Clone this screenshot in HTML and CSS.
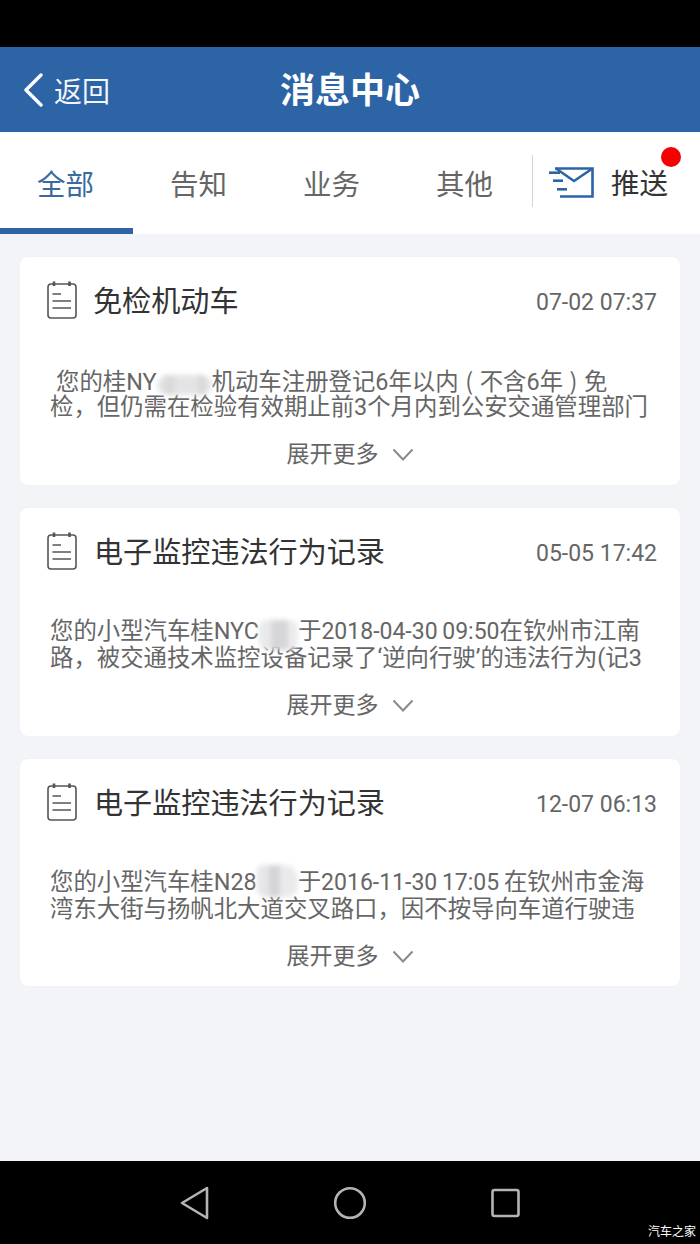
FILE: index.html
```html
<!DOCTYPE html>
<html lang="zh-CN">
<head>
<meta charset="utf-8">
<title>消息中心</title>
<link rel="stylesheet" href="styles.css">
</head>
<body>
<div class="screen">
  <div class="statusbar"></div>
  <header class="appbar">
    <div class="back">
      <svg class="back-icon" width="22" height="34" viewBox="0 0 22 34"><path d="M19 2 L4 17 L19 32" fill="none" stroke="#fff" stroke-width="3.4" stroke-linecap="round" stroke-linejoin="round"/></svg>
      <span>返回</span>
    </div>
    <h1 class="title">消息中心</h1>
  </header>
  <nav class="tabs">
    <div class="tab active">全部</div>
    <div class="tab">告知</div>
    <div class="tab">业务</div>
    <div class="tab">其他</div>
    <div class="push">
      <svg width="48" height="34" viewBox="0 0 48 34"><g fill="none" stroke="#2c64a5" stroke-width="2.6"><path d="M6 4.500 H43.500 V32.500 H11"/><path d="M7 4.500 L25 17 L43.500 4.500"/><path d="M0 8.700 H11"/><path d="M4 16.700 H14"/><path d="M8 25.300 H18"/></g></svg>
      <span class="push-label">推送</span>
      <i class="dot"></i>
    </div>
  </nav>
  <main class="list">
    <article class="card">
      <div class="card-head">
        <svg class="note" width="32" height="40" viewBox="0 0 32 40"><use href="#note"/></svg>
        <h2 class="card-title t1">免检机动车</h2>
        <time class="card-time">07-02 07:37</time>
      </div>
      <div class="card-body">
        <p class="line ind">您的桂NY<span class="mask m1"></span>机动车注册登记6年以内<span class="paren">(</span>不含6年<span class="paren">)</span>免</p>
        <p class="line">检，但仍需在检验有效期止前3个月内到公安交通管理部门</p>
      </div>
      <div class="more">展开更多<svg width="22" height="14" viewBox="0 0 22 14"><path d="M1.500 1.500 L11 11.500 L20.500 1.500" fill="none" stroke="#8a8a8a" stroke-width="2"/></svg></div>
    </article>
    <article class="card">
      <div class="card-head">
        <svg class="note" width="32" height="40" viewBox="0 0 32 40"><use href="#note"/></svg>
        <h2 class="card-title">电子监控违法行为记录</h2>
        <time class="card-time">05-05 17:42</time>
      </div>
      <div class="card-body">
        <p class="line">您的小型汽车桂NYC<span class="mask m2"></span>于<span class="num">2018-04-30 09:50</span>在钦州市江南</p>
        <p class="line">路，被交通技术监控设备记录了‘逆向行驶’的违法行为(记3</p>
      </div>
      <div class="more">展开更多<svg width="22" height="14" viewBox="0 0 22 14"><path d="M1.500 1.500 L11 11.500 L20.500 1.500" fill="none" stroke="#8a8a8a" stroke-width="2"/></svg></div>
    </article>
    <article class="card">
      <div class="card-head">
        <svg class="note" width="32" height="40" viewBox="0 0 32 40"><use href="#note"/></svg>
        <h2 class="card-title">电子监控违法行为记录</h2>
        <time class="card-time">12-07 06:13</time>
      </div>
      <div class="card-body">
        <p class="line">您的小型汽车桂N28<span class="mask m3"></span>于<span class="num">2016-11-30 17:05 </span>在钦州市金海</p>
        <p class="line">湾东大街与扬帆北大道交叉路口，因不按导向车道行驶违</p>
      </div>
      <div class="more">展开更多<svg width="22" height="14" viewBox="0 0 22 14"><path d="M1.500 1.500 L11 11.500 L20.500 1.500" fill="none" stroke="#8a8a8a" stroke-width="2"/></svg></div>
    </article>
  </main>
  <footer class="navbar">
    <svg width="30" height="34" viewBox="0 0 30 34"><path d="M2 17 L27 2 V32 Z" fill="none" stroke="#b4b4b4" stroke-width="2.600" stroke-linejoin="round"/></svg>
    <svg width="34" height="34" viewBox="0 0 34 34"><circle cx="17" cy="17" r="14.800" fill="none" stroke="#b4b4b4" stroke-width="2.600"/></svg>
    <svg width="30" height="30" viewBox="0 0 30 30"><rect x="2.500" y="2" width="26" height="26" rx="2" fill="none" stroke="#b4b4b4" stroke-width="2.600"/></svg>
    <span class="mark">汽车之家</span>
  </footer>
</div>
<svg class="defs" width="0" height="0">
  <symbol id="note" viewBox="0 0 32 40">
    <rect x="2" y="4" width="28" height="34" rx="3" fill="none" stroke="#555" stroke-width="1.600"/>
    <path d="M8 1.500 V6 M23.500 1.500 V6" stroke="#555" stroke-width="2.600"/>
    <path d="M6.500 14 H15 M6.500 21 H25 M6.500 28 H25" stroke="#555" stroke-width="1.600"/>
  </symbol>
</svg>
</body>
</html>
```
FILE: styles.css
```css
* { box-sizing: border-box; }
html, body { margin: 0; padding: 0; }
body { font-family: Roboto, "Noto Sans CJK SC", sans-serif; }
.screen { width: 700px; height: 1244px; display: flex; flex-direction: column; background: #f3f4f8; overflow: hidden; }
.statusbar { height: 47px; background: #000; flex: none; }
.appbar { height: 85px; flex: none; background: #2c64a5; color: #fff; display: flex; align-items: center; justify-content: center; position: relative; }
.back { position: absolute; left: 22px; top: 0; height: 100%; display: flex; align-items: center; gap: 10px; font-size: 28px; color: #f2f5fa; }
.back-icon { display: block; }
.title { margin: 4px 0 0; font-size: 35px; font-weight: 700; line-height: 1; }
.tabs { height: 102px; flex: none; background: #fff; display: flex; align-items: stretch; }
.tab { width: 133px; display: flex; align-items: center; justify-content: center; font-size: 28.500px; color: #666; padding: 0 2px 1px 0; }
.tab.active { color: #3a6a9f; border-bottom: 6px solid #2c64a5; padding-top: 6px; }
.push { flex: 1; position: relative; display: flex; align-items: center; gap: 14px; margin: 23px 0 27px; padding-left: 16px; border-left: 1px solid #d2d4d8; }
.push svg { display: block; }
.push-label { font-size: 28.500px; color: #333; }
.dot { position: absolute; left: 128px; top: -8px; width: 20px; height: 20px; border-radius: 50%; background: #f60000; }
.list { flex: 1; padding: 23px 20px 0; display: flex; flex-direction: column; gap: 23px; }
.card { height: 228px; background: #fff; border-radius: 8px; padding: 0 23px 0 27px; flex: none; box-shadow: 0 0 2px rgba(0,0,0,.04); }
.card:last-child { height: 227px; }
.card-head { height: 88px; display: flex; align-items: center; }
.note { flex: none; display: block; margin: -3px 0 0 -1px; }
.card-title { margin: 4px 0 0 16px; flex: 1; font-size: 29.100px; font-weight: 400; color: #333; white-space: nowrap; line-height: 1; }
.card-title.t1 { margin-left: 15px; }
.card-time { font-size: 23px; color: #666; white-space: nowrap; margin: 2px 0 0 -1px; }
.card-body { margin-top: 22px; margin-left: 3px; font-size: 23.400px; line-height: 27px; color: #666; white-space: nowrap; }
.line { margin: 0; height: 27px; display: block; }
.ind { padding-left: 6px; }
.num { font-size: 23px; word-spacing: -1px; }
.paren { display: inline-block; width: .9em; text-align: center; font-family: "Noto Sans CJK SC", sans-serif; }
.mask { display: inline-block; position: relative; height: 0; }
.mask::before { content: ""; position: absolute; left: 0; right: 0; filter: blur(2.500px); }
.m1 { width: 55px; }
.m1::before { top: -15px; height: 20px; border-radius: 10px; background: linear-gradient(90deg, #e4e4e6 0 15%, #d9d9db 15% 30%, #e4e4e6 30% 75%, #d8d8da 75% 88%, #e4e4e6 88%); }
.m2 { width: 39px; }
.m2::before { top: -19px; height: 30px; border-radius: 8px; background: linear-gradient(90deg, #eaeaec 0 30%, #d6d6d8 30% 75%, #ececee 75%); }
.m3 { width: 41px; }
.m3::before { top: -25px; height: 32px; border-radius: 6px 14px 10px 8px; background: linear-gradient(90deg, #e6e6e8 0 30%, #d4d4d6 30% 55%, #eaeaec 55%); }
.more { margin: 19px 4px 0 0; display: flex; justify-content: center; align-items: center; gap: 13px; font-size: 23px; line-height: 30px; color: #666; }
.navbar { height: 83px; flex: none; background: #000; position: relative; display: flex; align-items: center; justify-content: flex-start; padding-left: 180px; gap: 123px; }
.navbar svg { display: block; }
.mark { position: absolute; right: 4px; bottom: 5px; font-size: 12px; line-height: 14px; color: #fff; }
.defs { position: absolute; }
```
